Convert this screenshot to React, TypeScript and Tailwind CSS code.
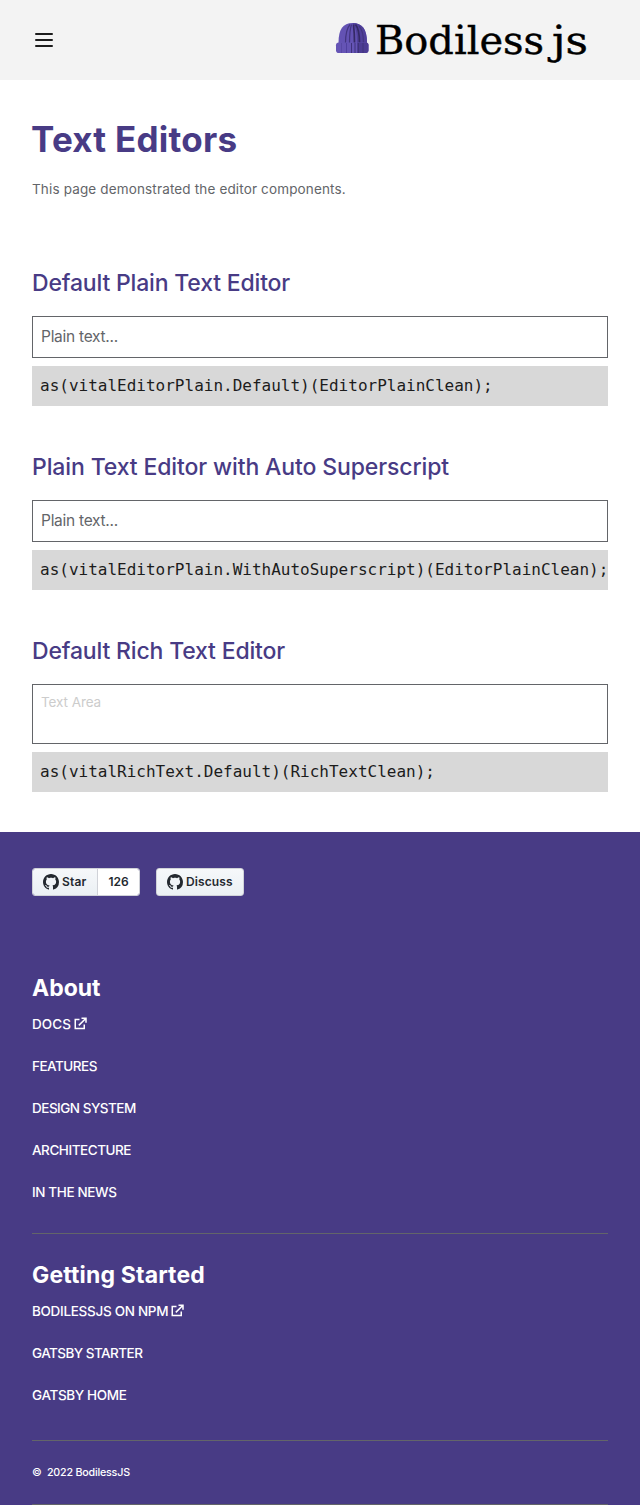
import type { ReactNode } from "react";

function Logo() {
  return (
    <svg width="258" height="52" viewBox="0 0 258 52" className="overflow-visible" role="img" aria-label="Bodiless js">
      <g transform="translate(0 6)">
        <path d="M2.500 23C2.500 9 7 3 16.500 3S31 9 31 23z" fill="#6352b3" />
        <path d="M16.500 3C26.500 3 31 9 31 23H21C21 13 20 8 16.500 3z" fill="#50409a" />
        <g fill="none" stroke="#433580" strokeWidth="1.200">
          <path d="M9.500 23C9.500 14 11 8 14 4.500" />
          <path d="M13.500 23C13.500 14 14 9 15.500 4.500" />
          <path d="M18.500 23C18.500 14 18 9 17.500 4.500" stroke="#352966" strokeWidth="1.700" />
          <path d="M23.500 23C23.500 14 22.500 8 19.500 4.500" stroke="#352966" strokeWidth="1.700" />
          <path d="M27.500 23C27.500 15 26 9 23 6" />
        </g>
        <rect x="0" y="22.500" width="32.500" height="10.500" rx="2.800" fill="#6554b5" />
        <path d="M21 22.500h9a2.500 2.500 0 0 1 2.500 2.500v5a3 3 0 0 1-3 3H21z" fill="#4c3c93" />
        <g stroke="#3f327b" strokeWidth="1">
          <path d="M5.500 23v10" stroke="#5848a5" />
          <path d="M10.500 23v10" stroke="#5040a0" />
          <path d="M15.500 23v10M19 23v10M22.500 23v10M27 23v10" />
        </g>
      </g>
      <g fill="#000" stroke="#000" strokeWidth="0.400" className="font-['DejaVu_Serif',serif] text-[40px]">
        <text x="39" y="40" textLength="169" lengthAdjust="spacingAndGlyphs">Bodiless</text>
        <text x="216" y="40" textLength="36" lengthAdjust="spacingAndGlyphs">js</text>
      </g>
    </svg>
  );
}

function GithubMark() {
  return (
    <svg width="16" height="16" viewBox="0 0 16 16" fill="#24292f" aria-hidden="true">
      <path
        fillRule="evenodd"
        d="M8 0C3.58 0 0 3.58 0 8c0 3.54 2.29 6.53 5.47 7.59.4.07.55-.17.55-.38 0-.19-.01-.82-.01-1.49-2.01.37-2.53-.49-2.69-.94-.09-.23-.48-.94-.82-1.13-.28-.15-.68-.52-.01-.53.63-.01 1.08.58 1.23.82.72 1.21 1.87.87 2.33.66.07-.52.28-.87.51-1.07-1.78-.2-3.64-.89-3.64-3.95 0-.87.31-1.59.82-2.15-.08-.2-.36-1.02.08-2.12 0 0 .67-.21 2.2.82.64-.18 1.32-.27 2-.27s1.36.09 2 .27c1.53-1.04 2.2-.82 2.2-.82.44 1.1.16 1.92.08 2.12.51.56.82 1.27.82 2.15 0 3.07-1.87 3.75-3.65 3.95.29.25.54.73.54 1.48 0 1.07-.01 1.93-.01 2.2 0 .21.15.46.55.38A8.01 8.01 0 0 0 16 8c0-4.42-3.58-8-8-8z"
      />
    </svg>
  );
}

function ExternalIcon() {
  return (
    <svg width="13" height="13" viewBox="0 0 13 13" fill="none" stroke="#fff" strokeWidth="1.500" className="ml-[3px] -translate-y-px" aria-hidden="true">
      <path d="M5.500 2.500H1.250v9h9V7.500" />
      <path d="M7.500 1.200h4.500v4.500M12 1.200 4.800 8.400" />
    </svg>
  );
}

function Heading({ children, className }: { children: ReactNode; className: string }) {
  return <h2 className={`text-[23px] leading-8 font-medium text-[#483b85] ${className}`}>{children}</h2>;
}

function Code({ children }: { children: ReactNode }) {
  return (
    <pre className="mt-2 h-10 bg-[#d8d8d8] pl-2 font-['DejaVu_Sans_Mono',monospace] text-base leading-10 whitespace-pre text-[#1c1c1c]">
      {children}
    </pre>
  );
}

function PlainField() {
  return (
    <div className="mt-[17px] h-[42px] border border-[#636569] px-2 text-[15.5px] leading-10 tracking-[-0.27px] text-[#636569]">
      Plain text...
    </div>
  );
}

function FooterLink({ children, className, external }: { children: ReactNode; className: string; external?: boolean }) {
  return (
    <li className="flex h-[42px] items-start">
      <a className="flex h-5 items-center text-[13.5px] leading-5">
        <span className={className}>{children}</span>
        {external && <ExternalIcon />}
      </a>
    </li>
  );
}

export default function App() {
  return (
    <div className="min-h-[1505px] w-full overflow-hidden bg-white font-['Inter',sans-serif]">
      <header className="flex h-20 items-center justify-between bg-[#f3f3f3] pr-[46px] pl-[35px]">
        <button aria-label="Menu" className="flex h-[14px] w-[18px] flex-col justify-between">
          <span className="h-0.5 w-full rounded-full bg-[#1c1c1c]" />
          <span className="h-0.5 w-full rounded-full bg-[#1c1c1c]" />
          <span className="h-0.5 w-full rounded-full bg-[#1c1c1c]" />
        </button>
        <Logo />
      </header>

      <main className="h-[752px] px-8 pt-[35px]">
        <h1 className="-ml-px h-12 text-[35px] leading-[48px] font-bold tracking-[0.25px] text-[#483b85]">Text Editors</h1>
        <p className="mt-4 text-[13.5px] leading-5 tracking-[0.15px] text-[#636569]">
          This page demonstrated the editor components.
        </p>

        <section className="mt-[68px]">
          <Heading className="tracking-[-0.18px]">Default Plain Text Editor</Heading>
          <PlainField />
          <Code>as(vitalEditorPlain.Default)(EditorPlainClean);</Code>
        </section>
        <section className="mt-[45px]">
          <Heading className="tracking-[-0.12px]">Plain Text Editor with Auto Superscript</Heading>
          <PlainField />
          <Code>as(vitalEditorPlain.WithAutoSuperscript)(EditorPlainClean);</Code>
        </section>
        <section className="mt-[45px]">
          <Heading className="tracking-[-0.17px]">Default Rich Text Editor</Heading>
          <div className="mt-[17px] h-[60px] border border-[#636569] px-2 pt-[7px] text-[13.5px] leading-5 tracking-[-0.08px] text-[#cccccc]">
            Text Area
          </div>
          <Code>as(vitalRichText.Default)(RichTextClean);</Code>
        </section>
      </main>

      <footer className="h-[673px] bg-[#483b85] px-8 pt-9 text-white">
        <div className="flex h-7 gap-4 text-xs leading-none font-semibold text-[#24292f]">
          <div className="flex w-[108px] overflow-hidden rounded-[3px] border border-[#d0d2d8]">
            <div className="flex w-[65px] items-center gap-[3px] border-r border-[#d0d2d8] bg-linear-to-b from-[#f6f8fa] to-[#ebf0f4] pl-[10px]">
              <GithubMark />
              <span className="tracking-[0.15px]">Star</span>
            </div>
            <div className="flex flex-1 items-center justify-center bg-white">126</div>
          </div>
          <div className="flex w-[88px] items-center gap-[3px] rounded-[3px] border border-[#d0d2d8] bg-linear-to-b from-[#f6f8fa] to-[#ebf0f4] pl-[10px]">
            <GithubMark />
            <span className="tracking-[0.1px]">Discuss</span>
          </div>
        </div>

        <h3 className="mt-[76px] h-8 text-[23px] leading-8 font-bold">About</h3>
        <ul className="mt-[10px] h-[220px] border-b border-[#636569] font-[450]">
          <FooterLink className="tracking-[0.05px]" external>DOCS</FooterLink>
          <FooterLink className="tracking-[-0.5px]">FEATURES</FooterLink>
          <FooterLink className="tracking-[-0.5px]">DESIGN SYSTEM</FooterLink>
          <FooterLink className="tracking-[-0.46px]">ARCHITECTURE</FooterLink>
          <FooterLink className="tracking-[-0.38px]">IN THE NEWS</FooterLink>
        </ul>

        <h3 className="mt-[25px] h-8 text-[23px] leading-8 font-bold tracking-[0.15px]">Getting Started</h3>
        <ul className="mt-[10px] h-[140px] border-b border-[#636569] font-[450]">
          <FooterLink className="tracking-[-0.3px]" external>BODILESSJS ON NPM</FooterLink>
          <FooterLink className="tracking-[-0.54px]">GATSBY STARTER</FooterLink>
          <FooterLink className="tracking-[-0.36px]">GATSBY HOME</FooterLink>
        </ul>

        <div className="h-16 border-b border-[#636569] pt-[22px] text-[10.7px] leading-5 font-medium tracking-[-0.19px] whitespace-pre">
          {"©  2022 BodilessJS"}
        </div>
      </footer>
    </div>
  );
}
